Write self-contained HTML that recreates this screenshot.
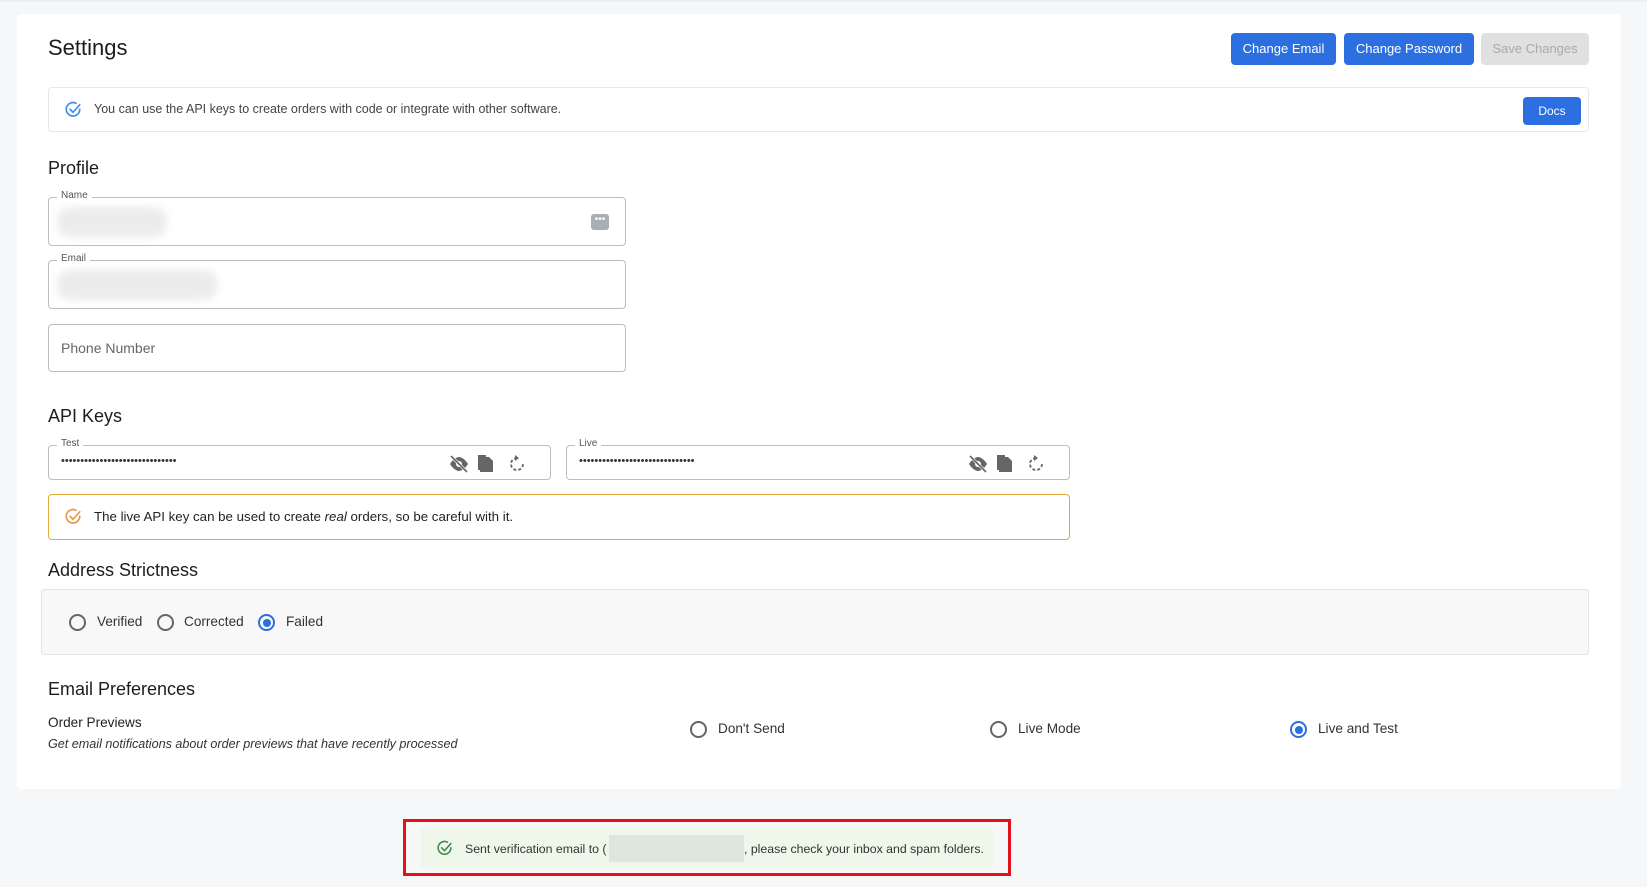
<!DOCTYPE html>
<html><head><meta charset="utf-8"><style>
*{box-sizing:border-box;margin:0;padding:0}
body{width:1647px;height:887px;background:#f6f7f9;font-family:"Liberation Sans",Arial,sans-serif;color:#222;position:relative;overflow:hidden}
.abs{position:absolute}
.card{left:17px;top:14px;width:1604px;height:775px;background:#fff;border-radius:4px}
h1,h2{font-weight:400;position:absolute;color:#1d1d1d}
h1{font-size:22px}
h2{font-size:18px}
.btn{position:absolute;border-radius:4px;color:#fff;font-size:13px;text-align:center;background:#2c6fe0}
.field{position:absolute;border:1px solid #bdbdbd;border-radius:4px;left:48px;width:578px}
.lbl{position:absolute;top:-8px;left:8px;background:#fff;padding:0 4px;font-size:10px;color:#555}
.blur{position:absolute;left:8px;height:30px;border-radius:12px;background:#ececec;filter:blur(4px)}
.dots{position:absolute;left:12px;top:9px;font-size:11px;letter-spacing:0;color:#333}
.radio{position:absolute;width:17px;height:17px;border-radius:50%;border:2px solid #666}
.radio.on{border-color:#2c6fe0}
.radio.on::after{content:"";position:absolute;left:2.5px;top:2.5px;width:8px;height:8px;border-radius:50%;background:#2c6fe0}
.rt{position:absolute;font-size:13.6px;color:#333}
</style></head><body>
<div class="abs" style="left:0;top:0;width:1647px;height:2px;background:#eceef1"></div>
<div class="abs card"></div>
<h1 style="left:48px;top:35px">Settings</h1>
<div class="btn" style="left:1231px;top:33px;width:105px;height:32px;line-height:32px">Change Email</div>
<div class="btn" style="left:1344px;top:33px;width:130px;height:32px;line-height:32px">Change Password</div>
<div class="btn" style="left:1481px;top:33px;width:108px;height:32px;line-height:32px;background:#e0e0e0;color:#aaa">Save Changes</div>

<div class="abs" style="left:48px;top:87px;width:1541px;height:45px;border:1px solid #e6e8eb;border-radius:4px"></div>
<svg class="abs" style="left:64px;top:101px" width="18" height="18" viewBox="0 0 24 24" fill="none" stroke="#3b8fe8" stroke-width="2.2" stroke-linecap="round"><path d="M21 11a9 9 0 1 1-5-8"/><path d="M8 11l4 4 9-10"/></svg>
<div class="abs" style="left:94px;top:102px;font-size:12.5px;color:#444">You can use the API keys to create orders with code or integrate with other software.</div>
<div class="btn" style="left:1523px;top:97px;width:58px;height:28px;line-height:28px;font-size:12px">Docs</div>

<h2 style="left:48px;top:158px">Profile</h2>
<div class="field" style="top:197px;height:49px"><span class="lbl">Name</span><div class="blur" style="top:9px;width:110px"></div>
<div class="abs" style="right:16px;top:16px;width:18px;height:16px;background:#a9adb4;border-radius:3px;color:#fff;font-size:10px;line-height:12px;text-align:center">•••</div></div>
<div class="field" style="top:260px;height:49px"><span class="lbl">Email</span><div class="blur" style="top:9px;width:160px"></div></div>
<div class="field" style="top:324px;height:48px"><div class="abs" style="left:12px;top:15px;font-size:14px;color:#666">Phone Number</div></div>

<h2 style="left:48px;top:406px">API Keys</h2>
<div class="field" style="top:445px;height:35px;width:503px"><span class="lbl">Test</span><div class="dots">••••••••••••••••••••••••••••••</div>
<svg class="abs" style="right:10px;top:8px" width="92" height="20" viewBox="0 0 92 20" fill="#666"><path d="M2 10c3-5 7-7 9-7s6 2 9 7c-3 5-7 7-9 7s-6-2-9-7z"/><circle cx="11" cy="10" r="3" fill="#fff"/><path d="M3 2l16 16" stroke="#fff" stroke-width="3"/><path d="M3 2l16 16" stroke="#666" stroke-width="1.6"/><path d="M32 3h9l4 4v11H32z"/><path d="M30 1h8v2h-6v13h-2z"/><path d="M69 4a6 6 0 1 0 6 6" stroke="#666" stroke-width="1.8" fill="none" stroke-dasharray="3 2"/><path d="M67 1l4 3-4 3z"/></svg></div>
<div class="field" style="top:445px;height:35px;width:504px;left:566px"><span class="lbl">Live</span><div class="dots">••••••••••••••••••••••••••••••</div>
<svg class="abs" style="right:10px;top:8px" width="92" height="20" viewBox="0 0 92 20" fill="#666"><path d="M2 10c3-5 7-7 9-7s6 2 9 7c-3 5-7 7-9 7s-6-2-9-7z"/><circle cx="11" cy="10" r="3" fill="#fff"/><path d="M3 2l16 16" stroke="#fff" stroke-width="3"/><path d="M3 2l16 16" stroke="#666" stroke-width="1.6"/><path d="M32 3h9l4 4v11H32z"/><path d="M30 1h8v2h-6v13h-2z"/><path d="M69 4a6 6 0 1 0 6 6" stroke="#666" stroke-width="1.8" fill="none" stroke-dasharray="3 2"/><path d="M67 1l4 3-4 3z"/></svg></div>

<div class="abs" style="left:48px;top:494px;width:1022px;height:46px;border:1px solid #e5a83a;border-radius:4px"></div>
<svg class="abs" style="left:64px;top:508px" width="18" height="18" viewBox="0 0 24 24" fill="none" stroke="#e8964a" stroke-width="2.2" stroke-linecap="round"><path d="M21 11a9 9 0 1 1-5-8"/><path d="M8 11l4 4 9-10"/></svg>
<div class="abs" style="left:94px;top:509px;font-size:13.3px;color:#222">The live API key can be used to create <i>real</i> orders, so be careful with it.</div>

<h2 style="left:48px;top:560px">Address Strictness</h2>
<div class="abs" style="left:41px;top:589px;width:1548px;height:66px;background:#f8f8f8;border:1px solid #e4e4e4;border-radius:3px"></div>
<div class="radio" style="left:69px;top:614px"></div><div class="rt" style="left:97px;top:614px">Verified</div>
<div class="radio" style="left:157px;top:614px"></div><div class="rt" style="left:184px;top:614px">Corrected</div>
<div class="radio on" style="left:258px;top:614px"></div><div class="rt" style="left:286px;top:614px">Failed</div>

<h2 style="left:48px;top:679px">Email Preferences</h2>
<div class="abs" style="left:48px;top:715px;font-size:13.6px;color:#222">Order Previews</div>
<div class="abs" style="left:48px;top:737px;font-size:12.6px;font-style:italic;color:#333">Get email notifications about order previews that have recently processed</div>
<div class="radio" style="left:690px;top:721px"></div><div class="rt" style="left:718px;top:721px">Don't Send</div>
<div class="radio" style="left:990px;top:721px"></div><div class="rt" style="left:1018px;top:721px">Live Mode</div>
<div class="radio on" style="left:1290px;top:721px"></div><div class="rt" style="left:1318px;top:721px">Live and Test</div>

<div class="abs" style="left:403px;top:819px;width:608px;height:57px;border:3px solid #e0121a"></div>
<div class="abs" style="left:421px;top:828px;width:572px;height:40px;background:#eef7ea;border-radius:3px"></div>
<svg class="abs" style="left:436px;top:840px" width="17" height="17" viewBox="0 0 24 24" fill="none" stroke="#3f8a4c" stroke-width="2.2" stroke-linecap="round"><path d="M21 11a9 9 0 1 1-5-8"/><path d="M8 11l4 4 9-10"/></svg>
<div class="abs" style="left:465px;top:842px;font-size:12.3px;color:#333">Sent verification email to (</div>
<div class="abs" style="left:609px;top:835px;width:135px;height:27px;background:#dfe6dd"></div>
<div class="abs" style="left:744px;top:842px;font-size:12.3px;color:#333">, please check your inbox and spam folders.</div>
</body></html>
